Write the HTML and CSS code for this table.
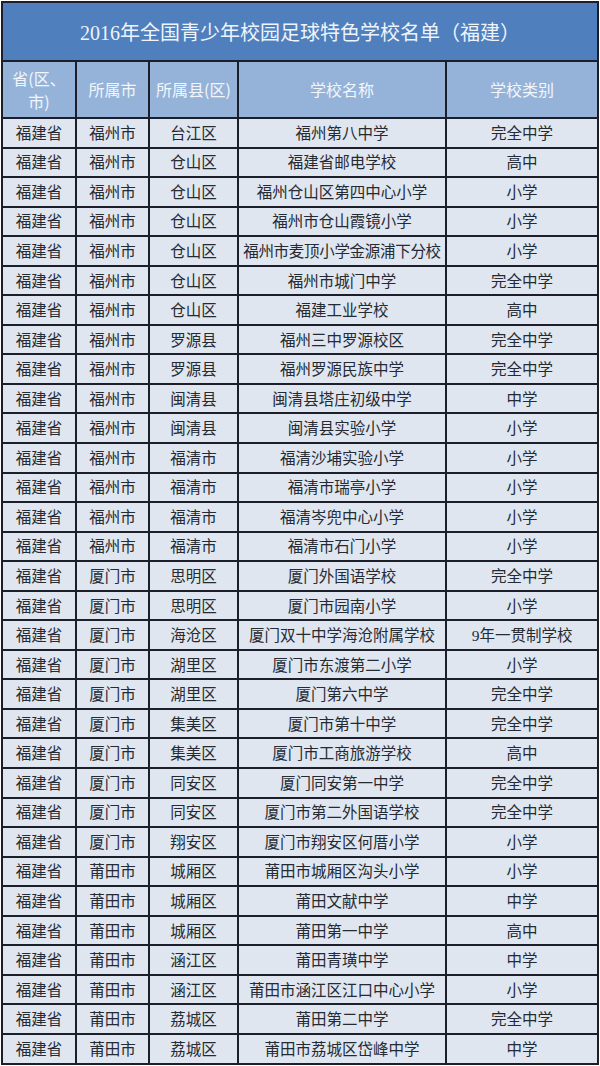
FILE: index.html
```html
<!DOCTYPE html>
<html lang="zh">
<head>
<meta charset="utf-8">
<title>2016年全国青少年校园足球特色学校名单(福建)</title>
<link rel="stylesheet" href="styles.css">
</head>
<body>
<div class="sheet">
<table class="list">
<colgroup>
<col class="c1"><col class="c2"><col class="c3"><col class="c4"><col class="c5">
</colgroup>
<thead>
<tr class="title"><th colspan="5">2016年全国青少年校园足球特色学校名单（福建）</th></tr>
<tr class="head"><th>省(区、<br>市)</th><th>所属市</th><th>所属县(区)</th><th>学校名称</th><th>学校类别</th></tr>
</thead>
<tbody>
<tr><td>福建省</td><td>福州市</td><td>台江区</td><td>福州第八中学</td><td>完全中学</td></tr>
<tr><td>福建省</td><td>福州市</td><td>仓山区</td><td>福建省邮电学校</td><td>高中</td></tr>
<tr><td>福建省</td><td>福州市</td><td>仓山区</td><td>福州仓山区第四中心小学</td><td>小学</td></tr>
<tr><td>福建省</td><td>福州市</td><td>仓山区</td><td>福州市仓山霞镜小学</td><td>小学</td></tr>
<tr><td>福建省</td><td>福州市</td><td>仓山区</td><td class="tight">福州市麦顶小学金源浦下分校</td><td>小学</td></tr>
<tr><td>福建省</td><td>福州市</td><td>仓山区</td><td>福州市城门中学</td><td>完全中学</td></tr>
<tr><td>福建省</td><td>福州市</td><td>仓山区</td><td>福建工业学校</td><td>高中</td></tr>
<tr><td>福建省</td><td>福州市</td><td>罗源县</td><td>福州三中罗源校区</td><td>完全中学</td></tr>
<tr><td>福建省</td><td>福州市</td><td>罗源县</td><td>福州罗源民族中学</td><td>完全中学</td></tr>
<tr><td>福建省</td><td>福州市</td><td>闽清县</td><td>闽清县塔庄初级中学</td><td>中学</td></tr>
<tr><td>福建省</td><td>福州市</td><td>闽清县</td><td>闽清县实验小学</td><td>小学</td></tr>
<tr><td>福建省</td><td>福州市</td><td>福清市</td><td>福清沙埔实验小学</td><td>小学</td></tr>
<tr><td>福建省</td><td>福州市</td><td>福清市</td><td>福清市瑞亭小学</td><td>小学</td></tr>
<tr><td>福建省</td><td>福州市</td><td>福清市</td><td>福清岑兜中心小学</td><td>小学</td></tr>
<tr><td>福建省</td><td>福州市</td><td>福清市</td><td>福清市石门小学</td><td>小学</td></tr>
<tr><td>福建省</td><td>厦门市</td><td>思明区</td><td>厦门外国语学校</td><td>完全中学</td></tr>
<tr><td>福建省</td><td>厦门市</td><td>思明区</td><td>厦门市园南小学</td><td>小学</td></tr>
<tr><td>福建省</td><td>厦门市</td><td>海沧区</td><td>厦门双十中学海沧附属学校</td><td>9年一贯制学校</td></tr>
<tr><td>福建省</td><td>厦门市</td><td>湖里区</td><td>厦门市东渡第二小学</td><td>小学</td></tr>
<tr><td>福建省</td><td>厦门市</td><td>湖里区</td><td>厦门第六中学</td><td>完全中学</td></tr>
<tr><td>福建省</td><td>厦门市</td><td>集美区</td><td>厦门市第十中学</td><td>完全中学</td></tr>
<tr><td>福建省</td><td>厦门市</td><td>集美区</td><td>厦门市工商旅游学校</td><td>高中</td></tr>
<tr><td>福建省</td><td>厦门市</td><td>同安区</td><td>厦门同安第一中学</td><td>完全中学</td></tr>
<tr><td>福建省</td><td>厦门市</td><td>同安区</td><td>厦门市第二外国语学校</td><td>完全中学</td></tr>
<tr><td>福建省</td><td>厦门市</td><td>翔安区</td><td>厦门市翔安区何厝小学</td><td>小学</td></tr>
<tr><td>福建省</td><td>莆田市</td><td>城厢区</td><td>莆田市城厢区沟头小学</td><td>小学</td></tr>
<tr><td>福建省</td><td>莆田市</td><td>城厢区</td><td>莆田文献中学</td><td>中学</td></tr>
<tr><td>福建省</td><td>莆田市</td><td>城厢区</td><td>莆田第一中学</td><td>高中</td></tr>
<tr><td>福建省</td><td>莆田市</td><td>涵江区</td><td>莆田青璜中学</td><td>中学</td></tr>
<tr><td>福建省</td><td>莆田市</td><td>涵江区</td><td>莆田市涵江区江口中心小学</td><td>小学</td></tr>
<tr><td>福建省</td><td>莆田市</td><td>荔城区</td><td>莆田第二中学</td><td>完全中学</td></tr>
<tr><td>福建省</td><td>莆田市</td><td>荔城区</td><td>莆田市荔城区岱峰中学</td><td>中学</td></tr>
</tbody>
</table>
</div>
</body>
</html>
```

FILE: styles.css
```css
html, body {
  margin: 0;
  padding: 0;
  background: #ffffff;
}

.sheet {
  padding: 1px 3px 0 1px;
}

.list {
  width: 596px;
  border-collapse: collapse;
  table-layout: fixed;
  font-family: "Liberation Serif", "Noto Sans CJK SC", serif;
  color: #252a33;
}

.c1 { width: 74px; }
.c2 { width: 73px; }
.c3 { width: 89px; }
.c4 { width: 208px; }
.c5 { width: 152px; }

.list th,
.list td {
  border: 2px solid #1c1f2a;
  padding: 0;
  text-align: center;
  vertical-align: middle;
  white-space: nowrap;
  overflow: hidden;
}

.title th {
  height: 57px;
  background: #4f7fbd;
  color: #eef4fb;
  font-size: 20px;
  font-weight: normal;
}

.head th {
  height: 55px;
  background: #95b3d8;
  color: #f2f6fb;
  font-family: "Noto Sans CJK SC", sans-serif;
  font-size: 16px;
  font-weight: normal;
  line-height: 23px;
}

.list td {
  height: 25.56px;
  background: #dfe6ef;
  font-size: 15.5px;
  line-height: 18px;
  padding-top: 2px;
}

.list td.tight {
  letter-spacing: -0.3px;
}
```
